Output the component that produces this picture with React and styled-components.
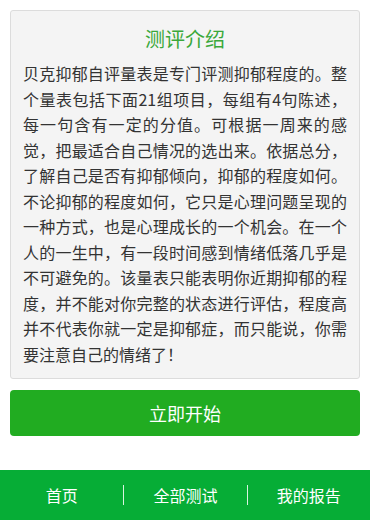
import React from 'react'
import styled, { createGlobalStyle } from 'styled-components'

const GlobalStyle = createGlobalStyle`
  html, body {
    margin: 0;
    padding: 0;
    background: #fff;
  }
  body {
    font-family: "Microsoft YaHei", "Noto Sans CJK SC", "Liberation Sans", sans-serif;
  }
`

const Page = styled.div`
  width: 370px;
  height: 520px;
  display: flex;
  flex-direction: column;
  box-sizing: border-box;
`

const Main = styled.main`
  flex: 1;
  padding: 10px 10px 0 10px;
  display: flex;
  flex-direction: column;
  gap: 11px;
`

const Card = styled.section`
  background: #f4f4f4;
  border: 1px solid #dcdcdc;
  border-radius: 3px;
  padding: 12px 12px 11px 12px;
  box-sizing: border-box;
`

const Title = styled.h2`
  margin: 0 0 6px 0;
  font-size: 20px;
  font-weight: normal;
  line-height: 32px;
  text-align: center;
  color: #3aa83a;
`

const Intro = styled.p`
  margin: 0;
  font-size: 16px;
  line-height: 25.5px;
  color: #333;
  text-align: justify;
`

const StartButton = styled.button`
  height: 46px;
  width: 100%;
  border: none;
  border-radius: 4px;
  background: #21ac21;
  color: #fff;
  font-family: inherit;
  font-size: 18px;
  cursor: pointer;
`

const TabBar = styled.nav`
  height: 50px;
  background: #06ad36;
  display: grid;
  grid-template-columns: repeat(3, 1fr);
  align-items: center;
`

const Tab = styled.a`
  color: #fff;
  font-size: 16px;
  text-align: center;
  text-decoration: none;
  line-height: 20px;
  border-left: ${props => (props.first ? 'none' : '1px solid rgba(255,255,255,0.85)')};
`

const App = () => (
  <Page>
    <GlobalStyle />
    <Main>
      <Card>
        <Title>测评介绍</Title>
        <Intro>
          贝克抑郁自评量表是专门评测抑郁程度的。整个量表包括下面21组项目，每组有4句陈述，每一句含有一定的分值。可根据一周来的感觉，把最适合自己情况的选出来。依据总分，了解自己是否有抑郁倾向，抑郁的程度如何。不论抑郁的程度如何，它只是心理问题呈现的一种方式，也是心理成长的一个机会。在一个人的一生中，有一段时间感到情绪低落几乎是不可避免的。该量表只能表明你近期抑郁的程度，并不能对你完整的状态进行评估，程度高并不代表你就一定是抑郁症，而只能说，你需要注意自己的情绪了！
        </Intro>
      </Card>
      <StartButton>立即开始</StartButton>
    </Main>
    <TabBar>
      <Tab first href="#">首页</Tab>
      <Tab href="#">全部测试</Tab>
      <Tab href="#">我的报告</Tab>
    </TabBar>
  </Page>
)

export default App
